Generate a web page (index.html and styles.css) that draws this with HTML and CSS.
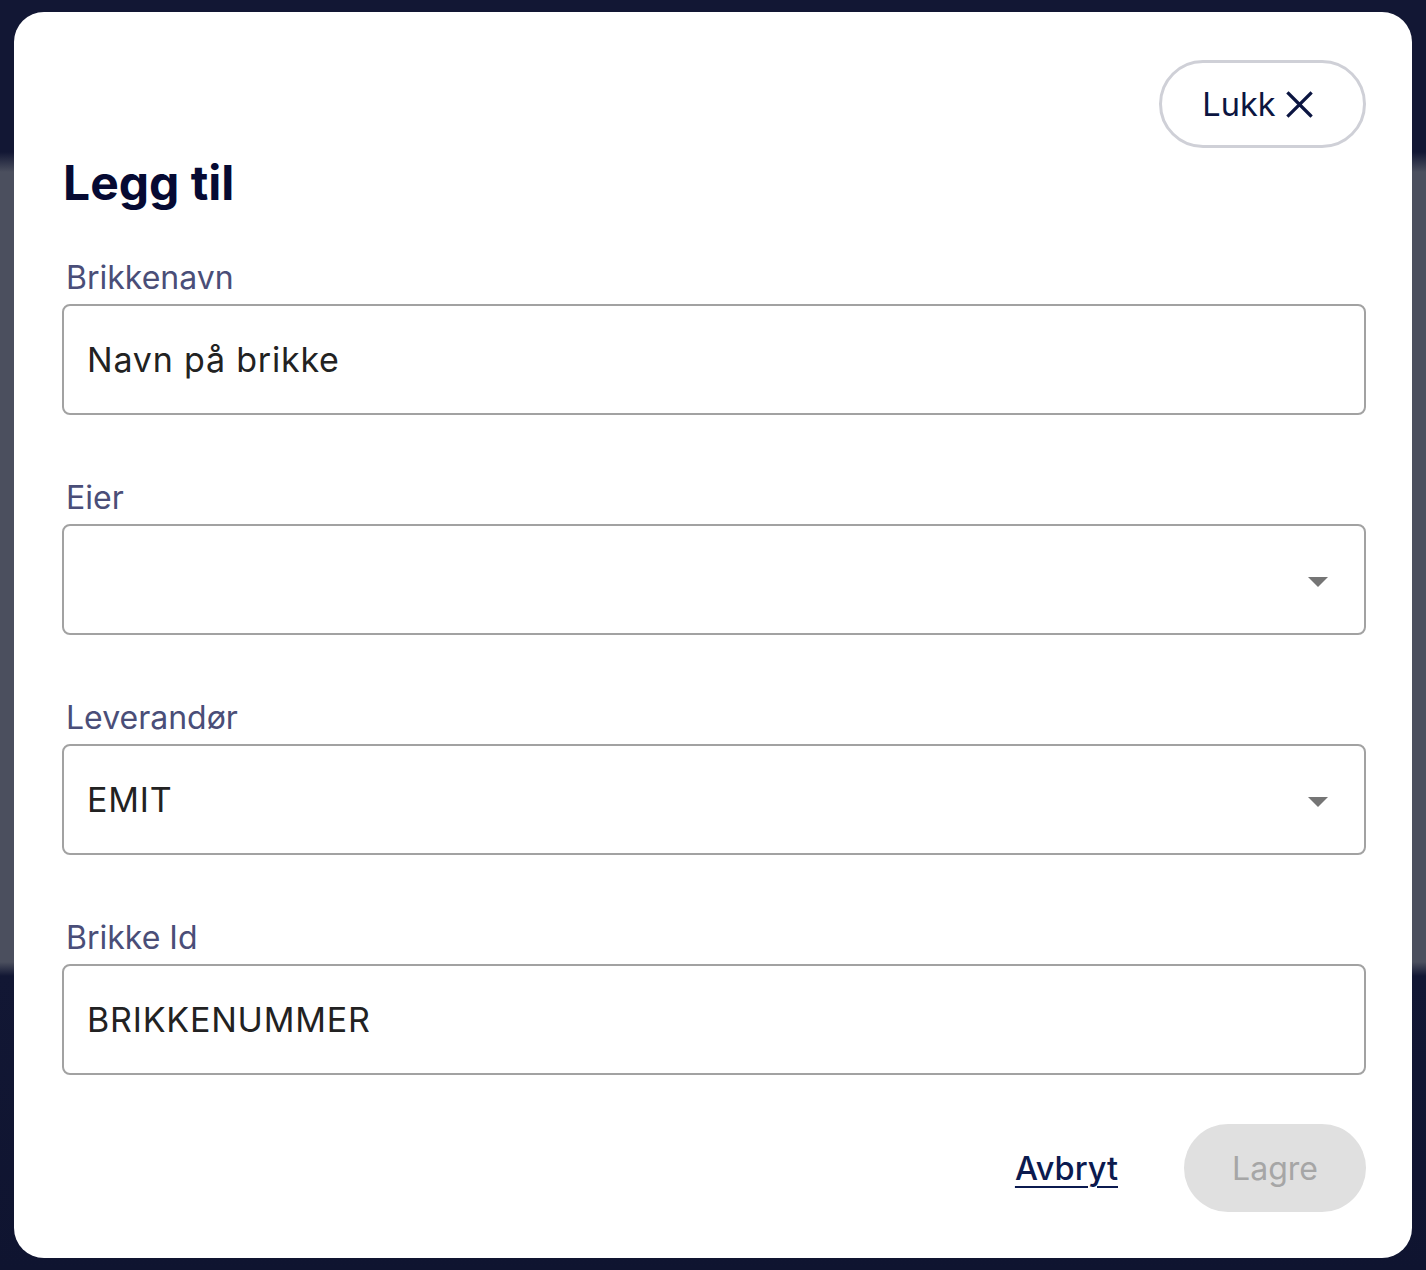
FILE: index.html
```html
<!DOCTYPE html>
<html lang="nb">
<head>
    <meta charset="UTF-8">
    <meta name="viewport" content="width=device-width, initial-scale=1.0">
    <title>Legg til brikke</title>
    <link rel="stylesheet" href="styles.css">
</head>
<body>
    <div class="backdrop"></div>

    <div class="modal">
        <div class="modal-top">
            <button class="close-button" type="button">
                Lukk
                <svg width="27" height="27" viewBox="0 0 27 27" aria-hidden="true">
                    <path d="M2.5 2.5 L24.5 24.5 M24.5 2.5 L2.5 24.5" stroke="#0b1541" stroke-width="3.2" fill="none" stroke-linecap="square"/>
                </svg>
            </button>
        </div>

        <h1 class="title">Legg til</h1>

        <div class="field">
            <label class="label">Brikkenavn</label>
            <div class="input">Navn på brikke</div>
        </div>

        <div class="field">
            <label class="label">Eier</label>
            <div class="input select">
                <span></span>
                <span class="arrow"></span>
            </div>
        </div>

        <div class="field">
            <label class="label">Leverandør</label>
            <div class="input select">
                <span>EMIT</span>
                <span class="arrow"></span>
            </div>
        </div>

        <div class="field">
            <label class="label">Brikke Id</label>
            <div class="input">BRIKKENUMMER</div>
        </div>

        <div class="actions">
            <a href="#" class="cancel">Avbryt</a>
            <button class="save" type="button" disabled>Lagre</button>
        </div>
    </div>
</body>
</html>
```

FILE: styles.css
```css
html, body {
    margin: 0;
    padding: 0;
}

body {
    width: 1426px;
    height: 1270px;
    font-family: Inter, "Noto Sans", sans-serif;
    background-color: #0f1530;
    position: relative;
    overflow: hidden;
}

.backdrop {
    height: 1270px;
    background: linear-gradient(to bottom,
        #121734 0, #121734 152px,
        #4b4f5e 172px, #4b4f5e 962px,
        #121734 976px, #0f1430 1270px);
}

.modal {
    position: absolute;
    top: 12px;
    left: 14px;
    width: 1398px;
    height: 1246px;
    box-sizing: border-box;
    padding: 48px 46px 46px 48px;
    background-color: #ffffff;
    border-radius: 30px;
    display: flex;
    flex-direction: column;
}

.modal-top {
    display: flex;
    justify-content: flex-end;
}

.close-button {
    height: 88px;
    width: 207px;
    box-sizing: border-box;
    border: 3px solid #cfd0d7;
    border-radius: 44px;
    background: #ffffff;
    font-family: Inter, sans-serif;
    font-size: 32.5px;
    color: #0b1541;
    display: flex;
    align-items: center;
    justify-content: center;
    gap: 10px;
    padding: 0 10px 0 0;
}

.title {
    margin: 5px 0 0 1px;
    font-size: 48px;
    line-height: 60px;
    font-weight: 700;
    color: #060a33;
}

.field {
    display: flex;
    flex-direction: column;
    margin-top: 47px;
}

.field + .field {
    margin-top: 65px;
}

.label {
    font-size: 32px;
    line-height: 36px;
    color: #4a4e78;
    padding-left: 4px;
    margin-bottom: 8px;
}

.input {
    height: 111px;
    box-sizing: border-box;
    border: 2px solid #a2a2a2;
    border-radius: 8px;
    padding: 0 36px 0 23px;
    display: flex;
    align-items: center;
    font-family: Inter, "Liberation Sans", sans-serif;
    font-size: 34px;
    letter-spacing: 0.8px;
    color: #222222;
}

.select {
    justify-content: space-between;
}

.arrow {
    width: 0;
    height: 0;
    border-left: 10px solid transparent;
    border-right: 10px solid transparent;
    border-top: 10px solid #757575;
    margin-top: 4px;
}

.actions {
    display: flex;
    justify-content: flex-end;
    align-items: center;
    gap: 66px;
    margin-top: 49px;
}

.cancel {
    font-size: 32.5px;
    font-weight: 500;
    color: #0b1a4f;
    text-decoration: underline;
    text-underline-offset: 6px;
    text-decoration-thickness: 2px;
}

.save {
    width: 182px;
    height: 88px;
    border: none;
    border-radius: 44px;
    background-color: #e0e0e0;
    color: #a6a6a6;
    font-family: Inter, sans-serif;
    font-size: 32px;
}
```
